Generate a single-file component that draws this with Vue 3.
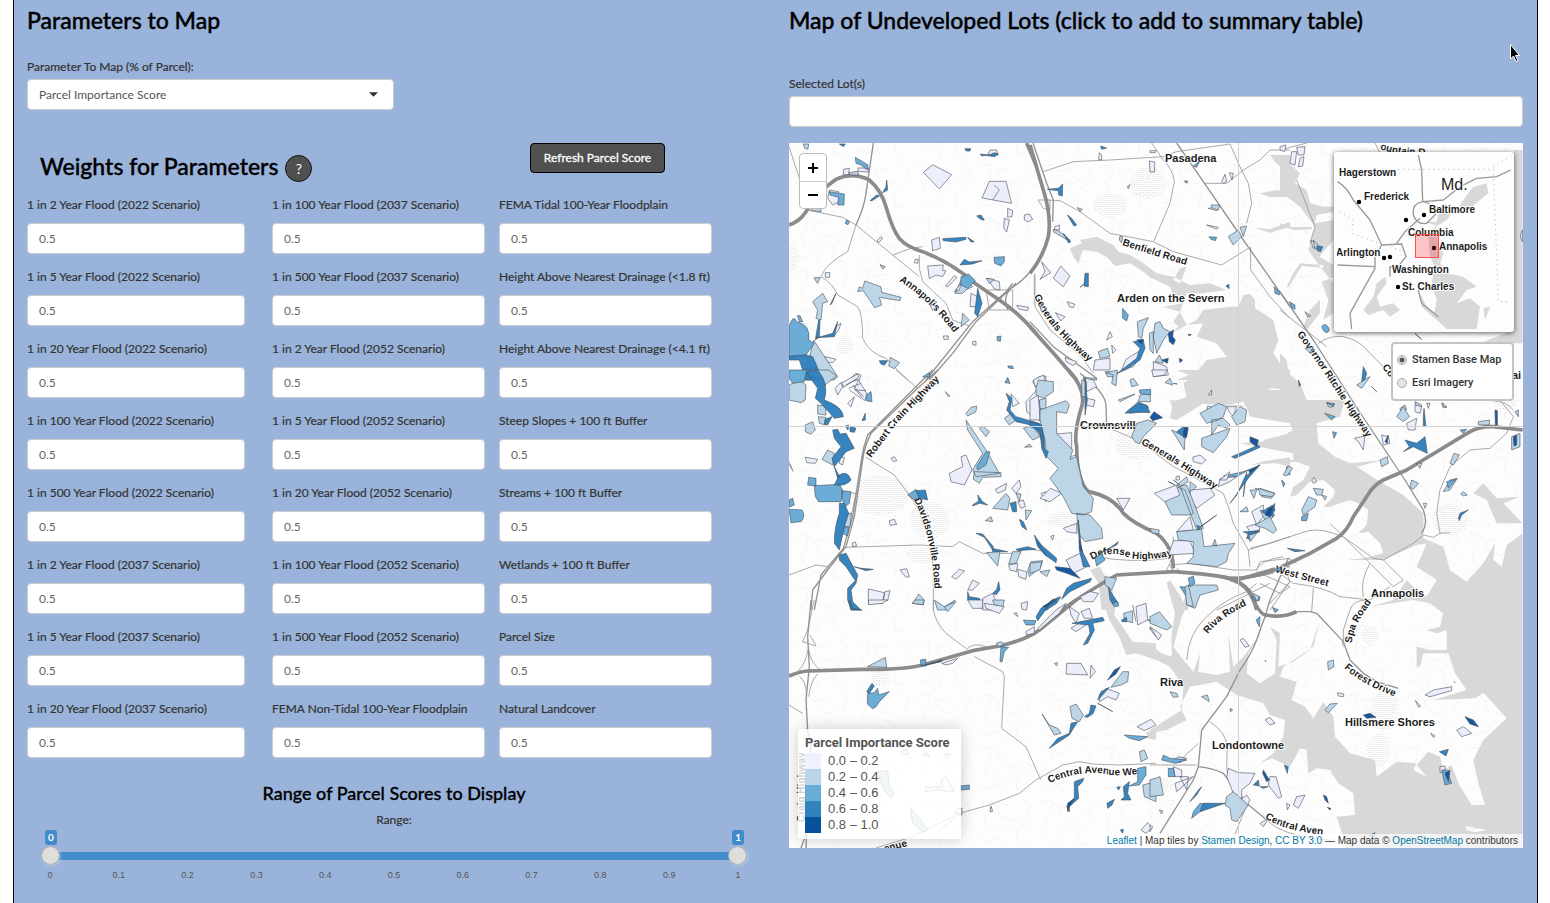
<script setup>
import { ref } from 'vue'

const parameter = ref('Parcel Importance Score')
const selectedLots = ref('')
const baseMap = ref('stamen')
const low = ref(0)
const high = ref(1)

const weights = ref([
  '1 in 2 Year Flood (2022 Scenario)', '1 in 100 Year Flood (2037 Scenario)', 'FEMA Tidal 100-Year Floodplain',
  '1 in 5 Year Flood (2022 Scenario)', '1 in 500 Year Flood (2037 Scenario)', 'Height Above Nearest Drainage (<1.8 ft)',
  '1 in 20 Year Flood (2022 Scenario)', '1 in 2 Year Flood (2052 Scenario)', 'Height Above Nearest Drainage (<4.1 ft)',
  '1 in 100 Year Flood (2022 Scenario)', '1 in 5 Year Flood (2052 Scenario)', 'Steep Slopes + 100 ft Buffer',
  '1 in 500 Year Flood (2022 Scenario)', '1 in 20 Year Flood (2052 Scenario)', 'Streams + 100 ft Buffer',
  '1 in 2 Year Flood (2037 Scenario)', '1 in 100 Year Flood (2052 Scenario)', 'Wetlands + 100 ft Buffer',
  '1 in 5 Year Flood (2037 Scenario)', '1 in 500 Year Flood (2052 Scenario)', 'Parcel Size',
  '1 in 20 Year Flood (2037 Scenario)', 'FEMA Non-Tidal 100-Year Floodplain', 'Natural Landcover'
].map(label => ({ label, value: '0.5' })))

const ticks = ['0', '0.1', '0.2', '0.3', '0.4', '0.5', '0.6', '0.7', '0.8', '0.9', '1']
const legend = ['0.0 – 0.2', '0.2 – 0.4', '0.4 – 0.6', '0.6 – 0.8', '0.8 – 1.0']

// Each sheet holds geometry at three units per map unit, offset by at.
const sheets = [
  {
    at: 'translate(786 140) scale(.33333)',
    water: '',
    major: 'M9 255Q40 245 60 215Q100 150 150 118Q200 95 250 120Q285 150 300 200Q320 270 340 295Q360 320 410 335Q500 370 560 425L640 480Q700 520 750 580M722 9L750 75',
    mid: 'M750 370Q720 420 660 455L560 545 420 720M690 430L570 545 500 640 430 720M640 480L680 430M665 510Q650 470 672 450M262 9L240 160Q235 200 210 255',
    minor: 'M9 20L40 115M210 255L185 335Q120 370 105 410M65 210L170 232 210 255 320 345 400 410M320 345L375 325 410 320M400 345L400 385 410 425 480 490 500 540 550 558M105 410Q140 430 155 465L215 500Q230 520 230 595Q250 640 300 655L365 720M600 450H680V510H610ZM745 405V490',
    p: [
      'M412 97L440 74 497 104 460 147ZM610 124L660 124 677 190 588 174ZM625 135L640 150 620 180M715 225L730 222 740 238 725 246 715 240ZM665 205L680 212 678 230 665 232ZM655 235L670 240 662 276 653 264ZM437 300L460 292 463 325 440 332ZM425 378L472 375 470 392 480 392 470 410 450 405 430 416ZM505 407L513 412 485 441 479 438ZM118 650L150 658 140 668 120 666ZM130 150L158 155 160 185 140 195 125 175ZM172 88L190 85 188 104 172 104ZM216 84L248 84 248 96 216 94ZM692 496L728 502 725 512 700 508ZM284 290L290 294 278 308 273 303ZM560 604L570 604 570 616 560 614ZM472 588L487 588 487 598 474 598ZM388 358L397 358 395 370 385 368ZM604 415L640 425 642 450 625 447ZM430 490L452 500 440 512ZM555 460L575 470 575 500 552 500ZM150 560L165 550 158 570 142 590ZM118 398L132 398 130 412 118 412ZM188 720L210 700 225 705 220 720ZM612 30L632 30 636 45 605 45Z',
      'M236 423L285 440 287 457 345 472 342 482 280 472 287 495 266 503 232 452 215 455 220 440 230 445ZM84 414L103 412 95 430ZM507 460L530 410 560 440 540 450 530 460ZM530 520L550 540 525 560ZM83 600L155 710 145 720 55 720ZM110 460L125 485 110 490 105 540 90 535 95 510 80 485ZM313 652L341 668 325 686 308 678ZM600 415L625 418 610 430ZM52 12L68 12 66 28 56 25ZM282 374L298 380 290 387ZM188 98L215 94 218 105 195 105ZM80 200L105 205 105 215 75 212ZM505 455L520 450 525 430Z',
      'M9 560Q22 520 32 545Q75 555 68 600L85 610 60 645 9 655ZM34 527L42 527 50 545 40 545ZM208 52L230 65 246 75 244 90 225 75 210 70ZM624 352L655 350 655 365 645 378 626 370ZM633 590L645 588 643 604 634 602ZM525 410L548 402 568 422 545 445 525 435ZM130 155L175 162 174 195 155 195 158 172 132 165ZM665 678L680 678 682 686 668 684ZM182 240L190 245 186 254 178 250Z',
      'M9 648L60 645 80 650Q100 690 105 720L60 720 40 660 9 660ZM302 120L305 150 290 158 300 140ZM252 182L272 165 280 168 258 182ZM470 296L540 292 540 298 510 306 472 302ZM545 292L565 305 555 306ZM537 26L554 26 552 33 540 33ZM582 42L610 45 625 38 637 42 625 50 600 46 588 48ZM572 228L585 225 595 240 588 240 578 233ZM522 375L535 358 550 366 588 362 560 372ZM575 445L588 490 575 530 566 520ZM98 540L102 540 100 590 88 600ZM150 460L138 490 132 495ZM90 594L140 580 155 545 145 590 110 592ZM160 12L178 12 172 20ZM280 662L305 662 295 676 285 672Z', ''
    ]
  },
  {
    at: 'translate(1030 140) scale(.33333)',
    water: 'M120 325L130 350 145 372 158 330 200 335 230 350 255 378 300 370 340 395 360 412 420 440 430 470 455 490 400 500 450 515 430 545 445 560 425 580 470 555 500 540 520 510 600 500 625 500 640 465 660 462 675 480 675 505 730 540 745 600 730 640 750 670 780 690V720H440L500 695 530 660 590 650 560 610 500 590 520 550 470 555 450 515 470 460 520 460 590 450 540 430 480 435 430 410 380 400 340 370 300 345 265 335 250 315 200 290 150 300 155 310ZM450 385L470 380 450 430 430 420ZM720 45L780 45 780 95Q740 80 720 45ZM690 160L740 150 780 155 780 170 720 172ZM670 262L720 268 780 245V260L720 278Z',
    major: 'M0 15L40 150Q65 230 55 290Q40 350 0 400M0 560L80 650 140 720',
    mid: 'M440 9L520 125 640 300 780 500M9 9L50 130 70 180 68 245M0 545L70 620 200 715',
    minor: 'M40 95L130 65 240 60 400 50 440 35 600 12M365 9L400 60Q430 90 433 125L420 190 372 303M50 180L90 182 150 215 240 280 370 305 430 335 575 375 655 325M600 12L630 80 655 130 665 190 650 250M525 130L590 130 640 90 690 60 720 30 780 30M662 320L662 390 720 470 780 535M15 400V500L60 570 150 645 190 700M24 180H60V210L40 205Z',
    p: [
      'M70 415L92 378 120 408 100 440ZM35 365L62 398 30 418 45 395ZM112 485L135 493 130 503 118 500ZM358 63L374 66 374 96 360 96ZM575 125L585 103 590 125 580 130ZM598 98L610 100 606 120ZM76 518L105 530 92 543ZM105 652L140 665 130 677 108 665ZM240 575L247 590 230 600ZM245 615L258 630 248 640ZM288 658L325 635 330 650 310 680 275 690ZM370 665L410 680 415 705 370 710ZM75 260L88 255 88 270 72 270ZM195 660L240 655 240 690 190 690ZM292 140L300 134 295 146ZM30 500L50 505 35 515ZM208 38L215 45 215 60 206 58ZM535 205L565 200 560 212ZM530 255L565 262 560 268ZM360 32L378 32 376 38 360 38Z',
      'M595 290L625 270 635 290 610 315ZM630 262L650 258 640 290ZM70 268L85 272 120 300 120 305 70 275ZM322 545L355 533 340 565 335 595 325 590ZM375 550L390 545 400 565 420 575 400 600 380 640 370 590ZM205 635L232 625 240 650 210 655ZM225 695L262 697 258 710 232 710ZM375 665L388 645 400 670ZM270 288L278 290 275 308 268 300ZM543 195L570 195 565 210 548 205ZM358 580L370 575 370 640 360 630ZM142 203L157 208 150 215ZM160 712L200 715 200 720H160Z',
      'M278 505L295 525 290 543 278 535ZM537 290L560 292 556 302 543 298ZM490 78L510 62 500 82ZM463 123L473 123 470 130ZM733 440L748 455 748 465 735 460Z',
      'M52 148L85 145 98 132 97 168 86 165 85 152ZM112 225L125 235 140 255 132 258ZM165 400L175 400 175 440 162 438ZM150 442L165 430ZM310 605L340 600 345 625 330 660 290 688 262 700 320 655 330 625ZM100 280L122 306 115 308ZM212 18L230 24 215 28ZM588 438L597 433 597 446Z',
      'M415 580L430 570 428 590 436 600 430 614 418 605ZM395 660L415 655 412 670ZM448 655L458 660 450 668ZM320 600L340 598 335 612ZM475 583L483 583 483 586H475Z'
    ]
  },
  {
    at: 'translate(1280 140) scale(.33333)',
    water: 'M0 60L22 65 60 100 45 130 80 150 90 190 130 200 160 200V215L110 225 105 250 160 240V300L118 350 160 375V412L125 425 145 480 130 540 160 520V430L120 380 85 330 95 300 105 260 60 200 20 170 0 160ZM700 30H728V610H600L650 590 700 570ZM0 640L20 660 25 700 60 730 80 780 110 810H0ZM120 480L90 510 70 560 80 570 120 520ZM95 260L40 262 0 250 0 256 40 270 95 268ZM130 375L60 370 40 400 20 440 26 442 48 405 66 378 130 384Z',
    major: '',
    mid: 'M0 455L100 600 235 810',
    minor: 'M0 30L80 9M0 510L140 620M115 610Q150 585 190 590Q240 600 270 640L330 700M285 9L330 100M50 120L105 260 90 310M640 782Q680 785 700 810',
    p: [
      'M50 22L75 20 72 45 55 45ZM35 35L50 35 45 75 30 70ZM60 55L72 50 68 78 55 80ZM92 300L110 315 100 325ZM728 270Q715 290 728 305ZM485 790L500 800 490 804ZM440 790L450 790 445 805ZM0 20L18 15 14 35 0 30Z',
      'M230 735L260 715 270 710 245 745ZM100 300L120 320 105 328ZM75 515L92 528 82 530ZM75 625L100 620 90 640ZM360 805L375 795 380 810H360ZM405 785L425 795 420 810 410 808ZM140 788L165 792 155 802 145 800Z',
      'M125 560Q135 545 147 565Q150 577 138 578Q130 575 125 560ZM28 485L45 495 45 508 35 503Z',
      'M110 318L128 320 122 335 112 332ZM250 680L260 700 255 718 245 725ZM275 740L290 755ZM55 720L62 735 58 740ZM405 580L425 598 415 590Z', ''
    ]
  },
  {
    at: 'translate(786 370) scale(.33333)',
    water: '',
    major: '',
    mid: 'M455 0L395 55 255 190Q235 230 230 270L205 440 180 530 125 600 80 660 75 720M440 0L245 195Q232 230 226 270L200 440 172 535 105 615 85 720',
    minor: 'M330 0L395 55M240 262L325 315 370 375 395 415 435 520 442 600V720M180 532L400 525 500 530 520 515 560 535 590 550 690 550 720 535 780 545M9 615L90 585 125 590M9 275L20 300M170 365L210 370 195 440',
    p: [
      'M147 55L165 37 172 47 155 75ZM165 40L215 12 218 22 172 52ZM205 80L195 110 185 100ZM218 30L245 75 235 92 205 55ZM200 45L232 80M205 60L240 62M190 60L225 85M180 45L215 28M188 55L225 40M58 262L95 268 88 280 62 278ZM490 310L530 290 525 260 540 255 558 300 535 345 495 335ZM720 95L750 62 762 105 765 155 722 125ZM628 358L662 340 658 360 635 370ZM677 355L700 330 705 350 690 370ZM695 395L712 390 718 410 705 415ZM310 452L325 448 332 463 312 466ZM342 600L362 596 370 620 360 622ZM247 657L295 668 290 700 247 700ZM297 665L312 662 305 692 292 690ZM497 620L520 598 536 603 510 628ZM675 72L700 100 680 110ZM740 35L760 20 780 18V50L755 62ZM545 660L560 630 580 640 560 660ZM590 685L620 670 640 720H590ZM478 65L492 78 487 80ZM315 265L325 260 333 272 322 275ZM198 520L208 516 212 528 200 530ZM765 370L780 365V395ZM668 585L695 580 692 605 672 600ZM695 598L722 605 720 628 698 620ZM163 262L175 262 170 285 160 280ZM9 282L22 305',
      'M9 45L40 30 60 45 58 90 45 98 9 90ZM70 0H128L152 18 110 50ZM95 105L118 108 120 135 95 132ZM97 140L120 142 118 165 100 160ZM58 165L80 155 88 180 75 193 58 185ZM108 268L125 240 145 250 140 285ZM540 150L600 240 640 310 570 320 560 300 590 250 545 180ZM580 175L590 168 610 185 600 200ZM565 305L645 308V320L590 322 580 340 562 328ZM620 415L660 370 672 385 665 420ZM178 430L196 430 192 470 175 470ZM602 548L642 545 635 588ZM380 700L398 672 415 690 412 705ZM725 602L735 575 770 572 765 590 730 620ZM445 690L475 710 508 690 480 720H455ZM668 582L680 545 705 545 690 580ZM540 130L555 112 572 108 570 125 545 138ZM655 145L675 130 690 150 670 165ZM718 420L737 422 720 450ZM598 452L615 440 620 455ZM690 370L705 372 700 395ZM620 690L655 690 650 712 625 705ZM712 175L740 165 762 200 740 210ZM760 90L780 85V120L762 115ZM716 232L730 222 738 230Z',
      'M9 0H75L60 10 55 35 20 40 9 25ZM85 347L160 343 170 360 165 395H98L88 380ZM65 345L68 322 90 325 90 348ZM9 418L48 420Q60 440 45 455L15 458ZM9 390L20 385 25 405 9 412ZM168 362L195 365 190 400 178 410 170 392ZM572 290L600 245 612 245 600 285 575 300ZM657 38L665 22 672 40ZM170 470L188 472 185 498 168 490ZM410 20L430 8 432 22ZM240 75L255 65 258 95 240 92ZM365 375L390 358 400 380 385 390Z',
      'M60 5L95 0Q130 40 115 90Q170 110 172 140L145 145 105 100 88 85 95 55ZM117 148L138 140 125 165 115 162ZM140 180L155 178 162 192 180 190 205 235 180 245 165 265 145 290 138 265 165 230 145 205ZM145 290L160 318 155 325ZM160 315Q185 300 195 330Q180 350 145 345ZM160 400L175 400 188 430 175 470 160 540 145 520Q145 470 160 430ZM160 555L180 550 215 615 210 640 195 660 200 695 225 720H195L185 690V655L208 632 180 590 160 570ZM192 168L210 175 205 187 192 185ZM178 168L188 165 186 180ZM390 362L418 360 425 390 400 385ZM238 130L238 150 228 152ZM660 70L678 85 672 120 690 140 760 160 775 190V240L760 190 735 165 690 155 662 120 670 95ZM560 405L578 393 575 375 590 395 605 405 580 400 560 408ZM672 400L690 395 692 425 680 425ZM570 490L590 492 622 530 620 540 595 502ZM618 535L665 545 620 545ZM690 538L725 530 750 538 695 542ZM745 495L780 545V558L755 530ZM700 448L712 455 722 480 708 470ZM205 590L225 595 262 598 240 602ZM638 635L642 660 630 675 620 670 632 658ZM545 665L550 680 580 685 590 715 545 690Z', ''
    ]
  },
  {
    at: 'translate(1030 370) scale(.33333)',
    water: 'M380 0H780V60L720 55 650 110 640 95 590 105 520 100 480 125 440 150 420 145 430 95 470 80 460 40 490 20 440 0ZM780 60V145L700 140 650 115 680 60ZM180 600L210 590 250 665 245 720H215L205 640ZM700 210L780 190V205L720 220ZM690 275L780 262V290L740 280ZM470 660L460 700 450 720H475Z',
    major: 'M115 0Q170 60 155 110Q130 190 140 230Q140 330 175 365Q250 380 280 430Q310 460 380 490Q430 530 430 595M95 720Q180 660 260 615L430 605 Q550 612 620 630L735 597M600 628Q660 640 680 720',
    mid: 'M150 10Q230 70 228 110L230 170M730 597L780 590',
    minor: 'M230 170L330 215 430 290 470 310 580 370Q600 420 610 460L655 540 660 590M655 540L780 500M410 600L430 555 430 500M200 560Q300 580 420 565M430 605L420 585 480 580 610 600 680 600 690 575 780 565M680 605L780 650 750 670M780 635L720 720M560 720L640 680 720 640M430 595L415 610M440 595L455 608',
    p: [
      'M78 192L125 188 125 238 78 232ZM0 90L25 75 30 150 0 150ZM170 85L195 90 190 110 168 105ZM30 385L62 355 95 370 60 395ZM373 370L440 345 458 365 465 390 410 400ZM480 360L540 355 555 375 500 415 480 385ZM440 485L480 440 490 480ZM430 512L480 512 495 550 415 555ZM533 108L560 115 545 140 530 125ZM488 262L510 255 528 270 515 282 490 275ZM118 262L138 255 140 275 122 278ZM365 0H410L405 15 370 20ZM165 25L190 30 200 50 170 65ZM100 475L140 460 140 490 110 485ZM260 385L300 385 280 420ZM108 570L150 550 170 590 130 610ZM590 110L620 110 610 140 600 130ZM570 325L620 320 600 335 565 350ZM535 75L545 60 545 75ZM665 425L700 405 700 440 680 465ZM62 500L72 495 68 510ZM10 30L40 15 45 30 15 50ZM150 680L180 665 205 670 190 695 160 695ZM438 320L448 318 448 330 438 330Z',
      'M18 55L25 30 70 35 70 65 40 85 18 75ZM30 120L108 92 118 105 110 130 80 125 80 190 128 240 120 268 140 260 160 350 190 385 185 425 160 435 125 430 100 380 60 325 85 295 50 260 45 210 30 150ZM140 430L180 435 215 475 218 505 165 515 145 490ZM405 395L450 375 440 350 465 360 480 400 490 430 480 435 425 435ZM450 348L470 345 500 420 520 475 500 480ZM440 485L515 478 522 530 615 520 595 550 590 575 560 590 470 580 490 560 490 515 445 510ZM305 200L320 160 355 150 380 160 340 200 328 222 315 215ZM425 180L465 200 463 240ZM510 130L565 100 590 110 580 140 565 150 530 160ZM545 150L580 145 600 165 590 175 565 165 545 195ZM605 140L630 110 650 120 645 155 620 165ZM515 205L600 175 590 200 550 248 515 230ZM325 95L330 75 360 70 362 95ZM300 30L310 25 325 45 305 50ZM265 90L315 72 270 95ZM228 8L262 0 258 48 245 40 250 15ZM155 30L170 35 168 80 155 80ZM0 580L35 575 30 600 0 610ZM475 645L560 645 565 660 510 675 495 715 470 705ZM480 335L500 350 480 365ZM405 38L420 25 428 45ZM430 40L442 42ZM430 330L450 345ZM415 335L435 345ZM440 345L470 320 475 335 450 350ZM548 525L555 508 560 528ZM690 420L735 435 710 460ZM630 425L650 410 655 425ZM690 355L735 370 725 385 695 380ZM360 475L388 480 385 492 365 488ZM770 290L780 290V315L768 312ZM225 620L260 625 245 660 225 645ZM60 600L50 620 30 605Z',
      'M328 60L362 58 362 75 330 70ZM290 125L325 95 355 110 350 125 300 130ZM450 650L475 652 468 678ZM475 625L490 618 495 640 480 650ZM195 565L215 550 225 570 200 588ZM580 318L640 305 655 300 620 320ZM640 380L650 305 645 330ZM665 680L690 680 688 692 672 690ZM735 600L752 590 750 605Z',
      'M0 155L35 165 42 235 55 245 48 265 35 235 30 180 0 170ZM285 130L325 100 350 105 360 128 320 125ZM20 515L40 530 80 565 78 578 45 555ZM145 450L155 540 180 590 160 590 148 540ZM130 640L185 625 180 635 120 665 95 688 110 655ZM245 530L265 515 260 525 210 550ZM500 465L510 470 560 435 520 465 505 480ZM605 260L640 245 685 225 690 232 650 250 615 265ZM620 375L645 320 690 285 655 325 600 400ZM695 425L728 405 735 420 720 440ZM165 25L172 90 165 135ZM440 185L460 170 475 175 468 205ZM235 650L245 670 265 700 250 705 240 690ZM675 355L720 370ZM660 485L690 480 665 495ZM655 490L665 510 650 505ZM40 720L65 690 92 680 80 700 50 720Z',
      'M372 125L398 143 368 152 360 142ZM75 590L120 595 150 625 110 610 80 600ZM462 175L473 172 470 200 460 202ZM655 300L690 285 660 310ZM148 510L158 545 150 540Z'
    ]
  },
  {
    at: 'translate(786 600) scale(.33333)',
    water: 'M950 0H990L985 45 1010 80 1040 125 1110 130V180L1050 160 1020 165 1000 110 970 60ZM1080 395L1110 395V420L1085 415Z',
    major: 'M9 228Q40 215 65 213L230 208Q350 210 410 195L560 152 640 138Q720 120 760 90L870 0',
    mid: 'M75 0L65 110 70 200 60 300 65 390M62 385L75 430 60 744M65 690L45 744',
    minor: 'M85 0L65 90 50 125 90 138 72 105M66 150Q60 190 35 215M68 150Q75 190 105 212M40 230Q60 240 62 290M95 222Q75 240 68 290M442 0V30Q450 70 480 100L540 145M565 170L650 215 655 230 647 385 720 440 760 530 765 540M9 315L50 340M270 744L380 710 520 640 610 615 700 580 750 540 830 495 880 485 920 492 1000 495 1110 490M540 150Q560 125 600 140M460 690L520 645',
    p: [
      'M248 0L305 0 290 10 247 14ZM545 0H590V25L560 25ZM595 10L655 20 640 40 600 25ZM467 190L515 175 500 190 480 195ZM842 190L885 190 905 225 840 222ZM915 195L928 215 912 235ZM755 85L810 30 840 10 820 40 760 90ZM720 95L745 80 745 100 722 105ZM850 20L880 40 870 70 855 45ZM885 35L910 25 920 55 895 55ZM940 285L960 265 1000 280 990 300 965 290 940 305ZM1053 380L1095 358 1110 375 1090 385 1075 392ZM345 455L365 448 366 462 350 464ZM472 462L495 462 485 474ZM612 635L615 618 620 634ZM508 640L515 625 528 625 528 645ZM1065 690L1085 668 1098 685 1080 700ZM805 190L815 188 812 198ZM855 85L885 65 915 65 870 95ZM1050 20L1080 10 1085 60 1055 75ZM1090 85L1105 90 1110 110ZM935 310L980 335 945 315ZM705 10L725 5 722 30 708 28ZM683 40L692 38 695 50ZM418 562L470 560 465 540 480 530 495 555 505 575 455 570 420 575Z',
      'M244 200L298 172 302 202ZM852 320L870 312 892 345 880 365 858 355ZM768 342L790 375 815 385 825 400 805 405ZM1013 40L1040 32 1040 68 1015 62ZM975 262L1010 215 1028 215 1025 245 1005 255ZM475 20L510 5 485 35ZM378 10L388 0H415L410 14ZM273 515L305 512 310 560 325 580 315 595 295 570ZM372 622L400 655 425 690 410 695 380 670ZM1060 455L1075 450 1085 475 1065 485ZM1070 555L1110 545V605L1075 590ZM1085 60L1110 60V75ZM410 465L420 457 432 468ZM630 130L645 125 655 132 640 140Z',
      'M245 280L265 278 275 265 278 285 310 275 280 305 270 320 260 326 244 312ZM523 558L550 555V568L525 570ZM403 180L420 178 418 198 405 195ZM1055 505L1080 500 1080 525 1060 555 1030 558 1055 545ZM645 140L668 142 655 155 648 185 642 185ZM1015 405L1085 410 1060 422 1030 415ZM712 60L750 62 745 75 720 75ZM978 8L995 5 998 18 985 20Z',
      'M258 250L265 258 250 280 242 275ZM858 70L950 52 955 62 920 70 925 90 905 130 892 135 912 100 908 75ZM895 350L910 340 915 315 930 318 922 340 905 352ZM790 445L815 415 850 400 855 370 875 365 850 405 820 425ZM865 545L893 535 890 545 875 560 878 595 850 620 850 635 842 620 865 595ZM963 610L985 598 978 615 965 625ZM1005 600L1015 590 1012 560 1030 545 1025 580 1035 600ZM992 562L1003 560 998 570ZM190 0L200 25 228 30 195 30ZM935 300L945 275 970 262 945 290ZM1003 690L1012 688 1010 700ZM1007 60L1022 52 1022 65H1008ZM765 25L800 0H812L790 15 755 62 750 50Z',
      'M965 240L985 210 1003 200 990 222ZM845 635L845 610 865 595 850 620ZM770 20L805 0 780 22ZM1040 15L1050 65M405 198L470 180 465 185Z'
    ]
  },
  {
    at: 'translate(1150 400) scale(.33333)',
    water: 'M90 40L130 10 290 20 300 50 420 70 428 90 380 120 270 130 430 160 430 180 340 185 300 195 440 185 480 200 460 240 430 260 420 290 440 285 480 245 520 240 555 270 550 290 520 320 540 320 600 300 625 310 655 330 650 375 625 400 655 395 690 430 700 460 640 475 590 480 700 480 800 435 830 430 800 500 860 540 830 590 800 570 770 540 730 600 660 620 790 600 840 610 880 640 870 680 830 690 860 700 890 690 890 750 840 750 800 740 800 800 775 800 810 800 820 760 895 760 915 820 950 870 850 900 975 895 1000 878 1070 955 1000 1020 970 1080 985 1150 1005 1215 965 1215 925 1150 905 1095 880 1110 870 1070 835 1055 800 1095 830 1130 855 1200 935 1250 930 1275 1010 1290 960 1300 1118 1344V400L1070 435 1055 500 1030 480 1035 430 1000 490 950 545 900 510 880 440 820 415 820 340 760 285 690 245 620 200 700 180 600 190 555 170 505 130 500 70 570 50 585 0H380L330 20 60 0 75 50ZM0 1000L50 990 110 960 90 920 120 860 200 845 260 885 340 910 360 945 405 960 400 1010 370 1060 330 1090 365 1075 420 1100 450 1045 470 1050 475 1120 500 1105 540 1110 565 1150 610 1180 615 1245 560 1250 590 1344H1118L950 1290 935 1250 855 1200 830 1130 790 1110 800 1090 740 1085 680 1130 675 1080 600 1060 555 1010 550 950 520 905 490 955 465 920 425 900 440 845 390 830 400 800 490 740 510 660 480 750 430 785 385 800 390 700 360 680 380 720 375 820 330 850 290 820 295 760 340 690 280 770 250 800 235 700 240 815 200 825 145 815 150 760 130 815 100 780 70 740 95 650 110 620 60 540 50 550 75 640 65 700 65 770 35 760 0 735V770L60 800 100 860 95 930 0 990ZM970 280L1010 300 1040 370 1118 370 1060 310 1110 290 1040 295 1000 250Z',
    major: 'M215 530Q270 540 300 575Q330 650 350 645Q400 655 440 635M240 535Q310 535 375 510L480 460 560 415Q590 395 610 350L650 290Q670 255 700 240L770 210 960 95Q990 78 1030 80L1118 90',
    mid: 'M605 0L765 240 820 330Q835 370 815 400M350 640Q340 660 320 720 300 770 270 810L230 890 155 990 145 1100 130 1140 30 1300M145 1100Q190 1105 220 1120L290 1210 350 1260M415 475L360 600 345 650M440 635L480 635 500 640 580 725 600 780 640 820 680 845 745 865',
    minor: 'M300 445L360 430 450 400Q500 380 550 400L580 410 730 560 760 540 700 480 670 475 580 410M700 480L790 430 820 405 850 412 870 400 860 340 870 270 900 200 960 150 1020 145 1070 100 1090 50 1050 0M375 510L430 550Q520 560 570 590L660 600 720 560M490 565L485 635M600 700 Q570 720 580 740M650 600Q610 600 600 630 L580 690V720M640 590Q630 540 660 490M320 510Q330 480 400 470M415 475L440 490M330 550L390 580M410 520L420 545 360 610M265 540L370 520M110 780Q115 700 170 650Q220 600 290 575L320 550M0 1095H140M145 1030L80 1090M180 965Q230 1000 232 1040L230 1100 235 1140M290 1215L260 1290 240 1344M540 370L580 410M350 1260Q400 1310 540 1320M870 400 900 398',
    p: [
      'M613 115L645 108 640 150 625 125ZM270 720L280 715 298 738 285 742ZM235 1105L265 1118 315 1120 300 1150 275 1170 275 1200 250 1180 230 1130ZM825 885L850 870 905 860 905 872 840 890ZM345 960L360 952 375 970 360 975ZM430 1215L440 1190 465 1185 445 1225ZM360 1130L378 1130 395 1190 385 1195 355 1155ZM920 990L940 980 965 1000 935 1010ZM870 1100L885 1098 885 1115 870 1118ZM0 1275L8 1280 0 1295ZM28 1230L38 1232 35 1242ZM695 105L715 110 720 130 700 135ZM770 70L800 55 795 90 775 90ZM210 240L240 215 230 240ZM485 240L492 232 500 245 490 250ZM330 1270L355 1255 340 1280ZM75 1150L130 1130 80 1175ZM70 1100L95 1110 95 1130 75 1130ZM795 15L815 20 810 40 795 35ZM878 8L890 22 880 20ZM90 1130L115 1130 110 1170ZM290 380L325 370 330 390 300 395ZM0 680L35 705 25 720ZM270 1200L290 1185 300 1200 290 1220ZM562 878L582 882 580 890 565 888ZM796 902L812 918 806 922ZM820 310L830 310 825 325ZM910 845L917 848M410 1210L420 1215 412 1230ZM842 1000L855 1008 850 1012Z',
      'M230 1190L250 1175 295 1215 260 1265 245 1260 240 1225 225 1215ZM0 1140L30 1130 40 1185 0 1190ZM455 330L475 290 500 300 495 320 460 345ZM400 225L415 198 428 205 410 228ZM900 190L912 160 928 165 910 195ZM880 275L900 240 922 235 900 270ZM780 262L785 240 805 250 790 268ZM533 785L550 780 552 800 535 810ZM525 930L540 912 562 910 535 938ZM740 50L760 20 778 50 760 65ZM985 65L1018 60 1018 75H985ZM1085 110L1110 100V140L1085 150ZM690 180L712 170 715 190 695 200ZM155 890L172 885 178 905ZM60 875L80 880 85 890 70 892ZM0 650L28 635 65 680 50 690 0 670ZM315 375L360 350 380 390 370 400 345 385ZM300 270L320 270 312 295ZM325 265L375 280 365 290 330 285ZM105 560L115 555 130 620 110 615ZM70 1080L85 1070 110 1075 90 1088ZM295 395L320 400 300 425ZM1095 35L1105 30 1105 50ZM932 282L940 275 952 285 940 288ZM310 580L328 590 320 605ZM490 265L520 268 515 285 500 285ZM515 285L530 290 525 300ZM345 780 348 785ZM240 925L248 930 242 935ZM800 190L815 190 810 205Z',
      'M35 1080L40 1065 60 1075 110 1080 75 1090ZM55 1105L70 1105 75 1130 55 1130ZM524 40L555 50 545 60ZM530 8L552 12 550 20ZM930 90L950 88 940 100ZM455 350L475 340 470 362 455 362ZM150 1210L180 1215 150 1235 125 1255 130 1235ZM367 622L385 630 375 638ZM875 1110L890 1110 905 1150 885 1155ZM890 245L918 238 895 265ZM548 95L560 98 552 115ZM660 1305L675 1298 672 1310ZM318 660L330 650 328 680ZM395 240L405 250 400 260Z',
      'M765 120L800 130 825 110 832 160 810 150 790 140 760 155 778 140ZM822 25L828 80 820 80 820 50ZM925 355L930 340 955 330 935 345 928 362ZM868 1055L895 1048 888 1068ZM310 1155L325 1140 328 1158ZM403 1095L415 1100 412 1120ZM160 1210L225 1210 150 1235ZM120 1205L145 1170 155 1160 140 1185ZM350 340L375 310 368 350ZM280 395L330 395 300 405ZM412 445L465 452 435 455ZM330 1160L355 1160 340 1165Z',
      'M1090 110L1100 105 1100 135 1092 138ZM1035 30L1042 32 1042 75 1036 75ZM640 945L660 940 678 952 650 955ZM340 1110L358 1140 350 1145 338 1120ZM885 1120L900 1110 895 1145ZM520 1185L530 1190 535 1210 525 1200ZM532 1222L542 1225 540 1230ZM300 110L325 120 320 140 300 125ZM945 950L970 960 985 980 960 972ZM345 345L355 325 370 322 360 350ZM705 125L715 105 712 130Z'
    ]
  }
]

const parks = [[1110, 205, 17, 12], [1148, 183, 18, 16], [880, 495, 28, 20], [930, 520, 20, 18], [1135, 445, 20, 14], [1065, 520, 18, 8], [1450, 520, 18, 16], [1370, 635, 9, 10], [1385, 710, 14, 20], [1378, 750, 12, 16], [790, 258, 9, 14], [845, 345, 8, 10], [1505, 400, 14, 10], [1470, 820, 10, 12], [1160, 785, 14, 8], [880, 678, 9, 8], [920, 555, 14, 8]]

const towns = [
  ['Pasadena', 1165, 162], ['Arden on the Severn', 1117, 302], ['Crownsvill', 1080, 429],
  ['Annapolis', 1371, 597], ['Riva', 1160, 686], ['Hillsmere Shores', 1345, 726], ['Londontowne', 1212, 749], ['ai', 1512, 379]
]

const streets = [
  ['Annapolis Road', 'M899 281Q935 303 966 350'],
  ['Benfield Road', 'M1122 245Q1155 256 1200 269'],
  ['Generals Highway', 'M1034 296Q1050 335 1108 376'],
  ['Governor Ritchie Highway', 'M1297 334L1326 376Q1345 405 1382 460'],
  ['Robert Crain Highway', 'M871 458L898 422 960 359'],
  ['Davidsonville Road', 'M914 500Q935 540 935 610'],
  ['Generals Highway', 'M1141 444Q1180 465 1235 503'],
  ['Defense Highway', 'M1092 560Q1110 549 1130 558Q1150 562 1190 552'],
  ['West Street', 'M1275 572Q1300 579 1345 591'],
  ['Riva Road', 'M1208 634Q1222 615 1258 600'],
  ['Spa Road', 'M1352 643Q1352 625 1378 594'],
  ['Forest Drive', 'M1344 668Q1365 687 1405 700'],
  ['Central Avenue We', 'M1049 783Q1085 768 1110 775Q1130 777 1160 770'],
  ['Central Aven', 'M1265 818Q1285 832 1335 836'],
  ['Craig Highway', 'M805 822V735'],
  ['ountain D', 'M1380 149Q1400 157 1440 155'],
  ['enue', 'M885 852L915 844'],
  ['Co', 'M1382 367L1395 385']
]

const cities = [
  ['Hagerstown', 1339, 176], ['Frederick', 1364, 200], ['Baltimore', 1429, 213], ['Columbia', 1408, 236],
  ['Annapolis', 1439, 250], ['Arlington', 1336, 256], ['Washington', 1392, 273], ['St. Charles', 1402, 290]
]
const dots = [[1359, 202], [1424, 215], [1406, 220], [1434, 248], [1384, 258], [1390, 257], [1398, 287]]
</script>

<template>
  <div class="page">
    <main class="panel">
      <section class="params" aria-labelledby="params-title">
        <h2 id="params-title">Parameters to Map</h2>
        <div class="field picker">
          <label for="parameter">Parameter To Map (% of Parcel):</label>
          <div class="select-wrap">
            <select id="parameter" v-model="parameter"><option>Parcel Importance Score</option></select>
            <svg class="caret" viewBox="0 0 10 5" aria-hidden="true"><path d="M0 0H10L5 5Z" /></svg>
          </div>
        </div>

        <div class="weights-head">
          <h2>Weights for Parameters</h2>
          <button class="help" type="button" aria-label="Help">?</button>
          <button class="refresh" type="button">Refresh Parcel Score</button>
        </div>

        <div class="weights">
          <div v-for="(w, i) in weights" :key="w.label" class="weight">
            <label :for="'w' + i">{{ w.label }}</label>
            <input :id="'w' + i" v-model="w.value" type="text">
          </div>
        </div>

        <div class="range">
          <h3>Range of Parcel Scores to Display</h3>
          <label for="low">Range:</label>
          <div class="slider">
            <div class="bubbles"><output for="low">{{ low }}</output><output for="high">{{ high }}</output></div>
            <div class="track">
              <input id="low" v-model="low" type="range" min="0" max="1" step="0.1">
              <input id="high" v-model="high" type="range" min="0" max="1" step="0.1" aria-label="Range maximum">
            </div>
            <div class="ticks"><span v-for="t in ticks" :key="t">{{ t }}</span></div>
          </div>
        </div>
      </section>

      <section class="lots" aria-labelledby="map-title">
        <h2 id="map-title">Map of Undeveloped Lots (click to add to summary table)</h2>
        <div class="field selected">
          <label for="lots">Selected Lot(s)</label>
          <input id="lots" v-model="selectedLots" type="text">
        </div>

        <div class="map">
          <svg class="canvas" viewBox="789 143 734 705" preserveAspectRatio="xMidYMid slice" role="img" aria-label="Map of undeveloped lots">
            <defs>
              <pattern id="dots" width="3" height="4" patternUnits="userSpaceOnUse"><path d="M0 0h1v1H0zM1.500 2h1v1h-1z" fill="#dadada" /></pattern>
              <pattern id="lanes" width="61" height="53" patternUnits="userSpaceOnUse">
                <path d="M2 8L14 5 21 12 34 9M14 5V17L8 24 12 35M21 12L25 22 38 25 44 18M30 31L42 36 40 47 52 50M3 43L13 47 22 41 26 50M47 4L55 11 50 20 59 27M43 28L52 34M27 38L18 30" class="lane" />
              </pattern>
              <path v-for="(s, i) in streets" :id="'st' + i" :key="i" :d="s[1]" />
            </defs>
            <rect x="789" y="143" width="734" height="705" fill="#fdfdfd" />
            <rect x="789" y="143" width="734" height="705" fill="url(#lanes)" />
            <ellipse v-for="(k, i) in parks" :key="i" :cx="k[0]" :cy="k[1]" :rx="k[2]" :ry="k[3]" fill="url(#dots)" />
            <g v-for="(s, i) in sheets" :key="'w' + i" :transform="s.at"><path :d="s.water" class="water" /></g>
            <g v-for="(s, i) in sheets" :key="'r' + i" :transform="s.at" class="roads">
              <path :d="s.minor" class="minor" /><path :d="s.mid" class="mid" /><path :d="s.major" class="major" />
            </g>
            <g class="names">
              <text v-for="t in towns" :key="t[0]" :x="t[1]" :y="t[2]">{{ t[0] }}</text>
            </g>
            <g class="names street-names">
              <text v-for="(s, i) in streets" :key="'n' + i"><textPath :href="'#st' + i">{{ s[0] }}</textPath></text>
            </g>
            <g v-for="(s, i) in sheets" :key="'p' + i" :transform="s.at" class="parcels">
              <path v-for="(d, c) in s.p" :key="c" :d="d" :class="'c' + c" />
            </g>
            <path d="M789 426.500H1523M1238.500 143V848" class="seam" />
          </svg>

          <div class="zoom">
            <button type="button" aria-label="Zoom in"><svg viewBox="0 0 12 12"><path d="M1 6H11M6 1V11" /></svg></button>
            <button type="button" aria-label="Zoom out"><svg viewBox="0 0 12 12"><path d="M1 6H11" /></svg></button>
          </div>

          <div class="corner">
            <div class="mini">
              <svg viewBox="1337 155 174 174" role="img" aria-label="Overview map">
                <rect x="1337" y="155" width="174" height="174" fill="#fdfdfd" />
                <g transform="translate(1280 140) scale(.33333)">
                  <path class="water" d="M430 245L470 245 480 205 530 200 500 240 460 265 445 290 450 350 465 380 455 430 470 480 460 530 500 567H590L600 500 570 475 530 490 560 450 590 440 550 410 500 400 480 370 490 340 480 320 470 290 465 255ZM545 185L580 140 620 130 625 160 570 205 530 220ZM315 410L290 430 280 470 250 510 265 525 310 510 330 530 360 510 340 490 300 500 290 470 320 430ZM420 460L425 500 470 540 480 530 440 500ZM610 505L630 500 615 540Z" />
                  <path class="inset-line" d="M415 44L425 90 428 185M172 125Q200 140 220 180L270 240 305 315 285 350V385L235 475 210 520 215 567M305 315L365 312 378 350 350 385 330 380V410M285 380L172 375M350 310L375 275 420 235M400 225Q395 190 430 185Q470 195 465 225L440 250Q410 255 400 225M430 185L490 180 540 140 590 115 650 110 692 90M415 450L425 490 475 530" />
                  <path class="border-line" d="M355 88H640L655 485H692M640 80L692 48M180 215L220 240 215 280 300 310 360 330 370 360" />
                </g>
                <circle v-for="(c, i) in dots" :key="i" :cx="c[0]" :cy="c[1]" r="2.200" />
                <g class="names city-names"><text v-for="c in cities" :key="c[0]" :x="c[1]" :y="c[2]">{{ c[0] }}</text><text x="1441" y="190" class="state">Md.</text></g>
                <rect x="1415.500" y="234.500" width="23" height="23" class="view" />
              </svg>
            </div>
            <fieldset class="layers">
              <label><input v-model="baseMap" type="radio" name="base" value="stamen"><span>Stamen Base Map</span></label>
              <label><input v-model="baseMap" type="radio" name="base" value="esri"><span>Esri Imagery</span></label>
            </fieldset>
          </div>

          <div class="legend">
            <strong>Parcel Importance Score</strong>
            <ul><li v-for="(l, i) in legend" :key="l"><i :class="'s' + i"></i>{{ l }}</li></ul>
          </div>

          <div class="credit"><a href="#">Leaflet</a> | Map tiles by <a href="#">Stamen Design</a>, <a href="#">CC BY 3.0</a> — Map data © <a href="#">OpenStreetMap</a> contributors</div>
        </div>
      </section>
      <svg class="pointer" viewBox="0 0 10 18" aria-hidden="true"><path d="M.5 .5V15L3.500 12 6 17.500 8 16.500 5.500 11.500H9.500Z" /></svg>
    </main>
  </div>
</template>

<style>
body { margin: 0; background: #fff; }
</style>

<style scoped>
* { box-sizing: border-box; }
.page { padding: 0 12px 0 13px; font-family: Lato, "Open Sans", sans-serif; color: #333; }
.panel { position: relative; display: grid; grid-template-columns: minmax(0, 1fr) minmax(0, 1fr); gap: 28px; min-height: 100vh; padding: 0 14px 0 13px; background: #9ab3da; border: solid #000; border-width: 0 1px; }
h2, h3 { margin: 0; font-weight: 500; color: #000; -webkit-text-stroke: 0.400px #000; }
h2 { font-size: 23px; line-height: 30px; }
.params > h2, .lots > h2 { padding-top: 5px; }
label { display: block; font-size: 12px; line-height: 20px; -webkit-text-stroke: 0.200px #333; }
input[type="text"], select { display: block; width: 100%; height: 31px; padding: 0 11px; border: 1px solid #ccc; border-radius: 4px; background: #fff; color: #555; font-family: inherit; font-size: 13px; outline: none; }
select { appearance: none; }
.picker { width: 50%; margin-top: 22px; }
.picker label { margin-bottom: 2px; }
.picker select { font-size: 12px; }
.select-wrap { position: relative; }
.caret { position: absolute; right: 16px; top: 13px; width: 9px; height: 5px; fill: #333; }
.weights-head { display: flex; align-items: flex-start; margin-top: 33px; padding-left: 13px; height: 39px; }
.weights-head h2 { padding-top: 8px; }
button { font-family: inherit; cursor: pointer; }
.help { width: 27px; height: 27px; margin: 12px 0 0 7px; padding: 0; border: 1px solid #111; border-radius: 50%; background: #505050; color: #fff; font-size: 14px; }
.refresh { min-width: 135px; margin: 0 96px 0 auto; height: 30px; padding: 0 8px; border: 1px solid #000; border-radius: 4px; background: #505050; color: #fff; font-size: 12px; line-height: 28px; -webkit-text-stroke: 0.300px #fff; }
.weights { display: grid; grid-template-columns: minmax(0, 245fr) minmax(0, 227fr) minmax(0, 213fr); row-gap: 13px; margin: 13px 49px 0 0; }
.weight label { margin-bottom: 8px; white-space: nowrap; }
.weight input { color: #666; font-size: 12px; }
.weight:nth-child(3n+1) { padding-right: 27px; }
.weight:nth-child(3n+2) { padding-right: 14px; }
.range { margin-top: 22px; text-align: center; }
.range h3 { font-size: 18px; line-height: 26px; -webkit-text-stroke: 0.300px #000; }
.range label { margin-top: 4px; }
.slider { margin: 0 14px; }
.bubbles { display: flex; justify-content: space-between; padding: 0 3px 0 4px; }
.bubbles output { padding: 0 3px; border-radius: 3px; background: #428bca; color: #fff; font-size: 10px; font-weight: 700; line-height: 15px; }
.track { position: relative; height: 20px; }
.track::before { content: ""; position: absolute; left: 9px; right: 9px; top: 7px; height: 8px; background: #428bca; }
.track input { position: absolute; inset: 0; width: 100%; height: 20px; margin: 0; background: none; appearance: none; pointer-events: none; }
.track input::-webkit-slider-thumb { appearance: none; width: 19px; height: 19px; border: 1px solid #aaa; border-radius: 50%; background: #dedede; box-shadow: 1px 1px 3px rgba(255, 255, 255, .3); pointer-events: auto; }
.ticks { display: flex; justify-content: space-between; margin-top: 4px; font: 9px/12px "Liberation Sans", Arial, sans-serif; color: #555; }
.ticks span { width: 18px; }
.selected { margin-top: 39px; }
.selected label { margin-bottom: 2px; }
.map { position: relative; width: 100%; aspect-ratio: 734 / 705; margin-top: 16px; overflow: hidden; background: #fdfdfd; font-family: "Liberation Sans", Arial, sans-serif; }
.canvas { display: block; width: 100%; height: 100%; }
.water { fill: #d8d8d8; }
.lane { fill: none; stroke: #ededed; stroke-width: .7; stroke-dasharray: 2 1; }
.roads path, .inset-line { fill: none; stroke-linejoin: round; }
.minor { stroke: #999; stroke-width: 2.500; }
.mid { stroke: #929292; stroke-width: 4; }
.major { stroke: #8b8b8b; stroke-width: 11; }
.names { font: bold 11px "Liberation Sans", Arial, sans-serif; fill: #1c1c1c; stroke: #fff; stroke-width: 2px; stroke-linejoin: round; paint-order: stroke; }
.street-names, .city-names { font-size: 10px; }
.names .state { font-size: 16px; font-weight: 400; }
.parcels path { stroke: #444e58; stroke-width: 1.800; stroke-linejoin: round; fill-opacity: .96; }
.c0 { fill: #ebeefb; } .c1 { fill: #b9d4e6; } .c2 { fill: #65aad5; } .c3 { fill: #2f80bd; } .c4 { fill: #10509c; }
.seam { fill: none; stroke: #d2d2d2; stroke-width: 1; }
.zoom { position: absolute; left: 10px; top: 10px; width: 28px; border: 1px solid #bbb; border-radius: 4px; background: #fff; }
.zoom button { display: grid; place-items: center; width: 100%; height: 27px; padding: 0; border: 0; background: none; }
.zoom button + button { border-top: 1px solid #ccc; }
.zoom svg { width: 12px; height: 12px; fill: none; stroke: #000; stroke-width: 2; }
.corner { position: absolute; right: 9px; top: 9px; display: flex; flex-direction: column; align-items: flex-end; gap: 10px; }
.mini { width: 180px; height: 180px; padding: 3px; border-radius: 3px; background: #fdfdfd; box-shadow: 0 1px 5px rgba(0, 0, 0, .65); }
.mini svg { display: block; width: 100%; height: 100%; }
.inset-line { stroke: #999; stroke-width: 4; }
.border-line { fill: none; stroke: #aaa; stroke-width: 3; stroke-dasharray: 3 12; }
.view { fill: #f00; fill-opacity: .22; stroke: #ff4d4d; }
.layers { width: 123px; min-width: 0; height: 59px; margin: 0; padding: 4px 8px 0 4px; border: 2px solid #c4c4c4; border-radius: 4px; background: #fff; }
.layers label { display: flex; align-items: center; gap: 5px; height: 23px; font: 500 11px/23px Roboto, sans-serif; white-space: nowrap; -webkit-text-stroke: 0; }
.layers input { appearance: none; width: 10px; height: 10px; margin: 0; flex: none; border: 1px solid #aaa; border-radius: 50%; background: #e4e4e4; }
.layers input:checked { background: radial-gradient(circle, #555 0 2px, #e4e4e4 3px); }
.legend { position: absolute; left: 9px; bottom: 9px; width: 163px; padding: 5px 7px 6px; border-radius: 4px; background: rgba(255, 255, 255, .8); box-shadow: 0 0 15px rgba(0, 0, 0, .2); color: #555; font: 13px/16px Roboto, "Liberation Sans", sans-serif; }
.legend strong { display: block; line-height: 17px; margin-bottom: 2px; white-space: nowrap; }
.legend ul { margin: 0; padding: 0; list-style: none; }
.legend li { display: flex; height: 16px; font-family: "Liberation Sans", Arial, sans-serif; }
.legend i { width: 16px; height: 16px; margin-right: 7px; }
.s0 { background: #eff1fd; } .s1 { background: #bad5e7; } .s2 { background: #68add6; } .s3 { background: #3182bd; } .s4 { background: #08519c; }
.credit { position: absolute; right: 0; bottom: 0; padding: 0 5px; background: rgba(255, 255, 255, .7); color: #333; font-size: 10px; line-height: 14px; white-space: nowrap; }
.credit a { color: #0078a8; text-decoration: none; }
.pointer { position: absolute; right: 17px; top: 44px; width: 10px; height: 18px; fill: #000; stroke: #fff; stroke-width: 1; }
</style>
